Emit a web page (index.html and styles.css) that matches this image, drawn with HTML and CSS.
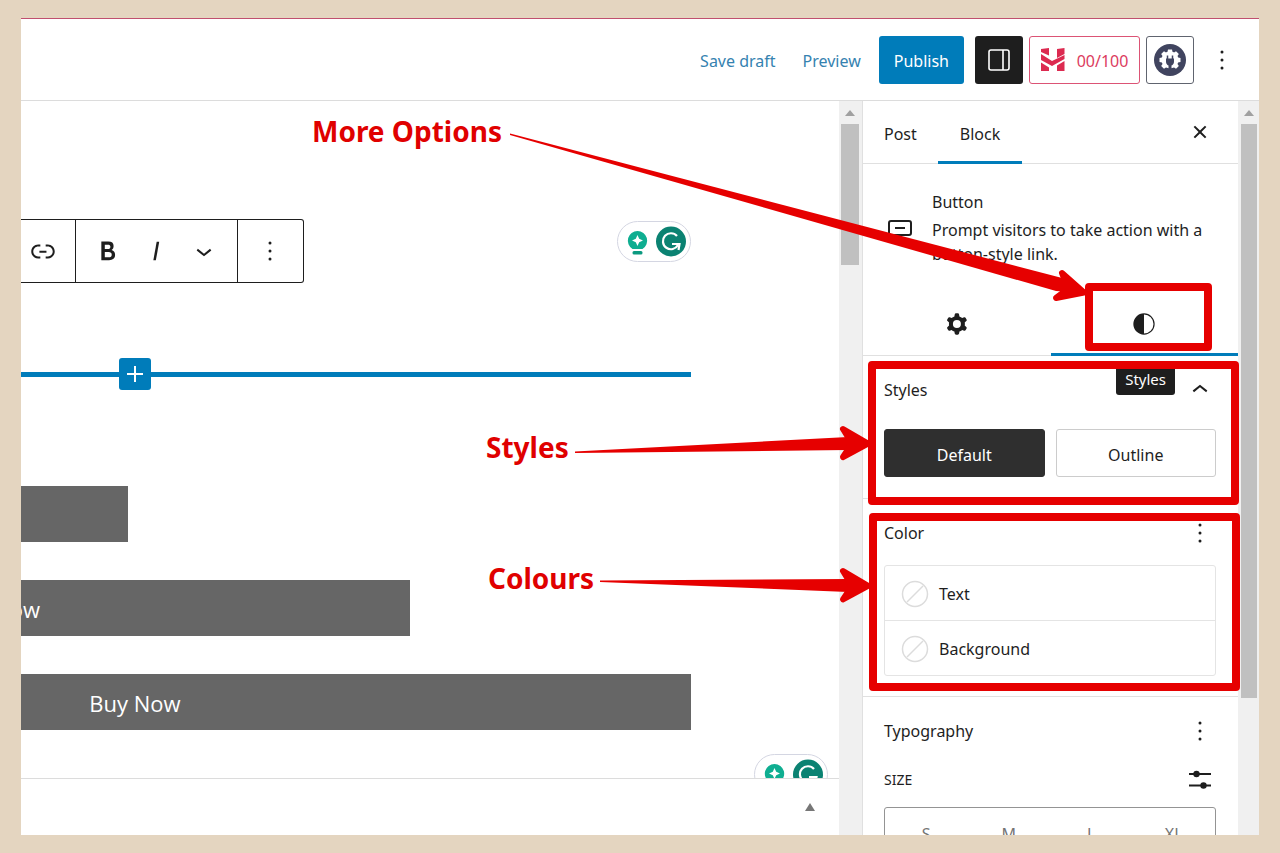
FILE: index.html
```html
<!DOCTYPE html>
<html lang="en">
<head>
<meta charset="utf-8">
<title>Edit post</title>
<link rel="stylesheet" href="styles.css">
</head>
<body>
<div class="frame">
  <header class="header">
    <button class="link-button">Save draft</button>
    <button class="link-button">Preview</button>
    <button class="publish">Publish</button>
    <div class="header-tools">
      <button class="tool tool-dark" aria-label="Settings">
        <svg class="icon" viewBox="0 0 32 32"><rect x="6" y="6" width="20" height="20" rx="2" fill="none" stroke="#fff" stroke-width="1.600"/><path d="M20 6v20" stroke="#fff" stroke-width="1.600"/></svg>
      </button>
      <button class="tool score">
        <svg class="score-icon" viewBox="0 0 24 24"><g fill="#dc2a50"><path d="M0 1l8-1v7.500L0 4z"/><path d="M16 1l7.500-1v6L16 10z"/><path d="M0 6l11 7 12.500-6v4L11 18 0 12z"/><path d="M0 14.500l8 5V23H0z"/><path d="M16 17.500l7.500-4.500v10H16z"/></g></svg>
        <span>00/100</span>
      </button>
      <button class="tool tool-outline" aria-label="Plugin settings">
        <svg class="icon" viewBox="0 0 32 32"><circle cx="16" cy="16" r="16" fill="#40445f"/><g fill="#fff"><circle cx="16" cy="16" r="8.500"/><path d="M14 5.500h4l1 5h-6z"/><path d="M14 5.500h4l1 5h-6z" transform="rotate(45 16 16)"/><path d="M14 5.500h4l1 5h-6z" transform="rotate(90 16 16)"/><path d="M14 5.500h4l1 5h-6z" transform="rotate(135 16 16)"/><path d="M14 5.500h4l1 5h-6z" transform="rotate(225 16 16)"/><path d="M14 5.500h4l1 5h-6z" transform="rotate(270 16 16)"/><path d="M14 5.500h4l1 5h-6z" transform="rotate(315 16 16)"/></g><path d="M12 14.500h8v3c0 2-1 3.500-2.500 4V27h-3v-5.500c-1.500-.5-2.500-2-2.500-4z" fill="#40445f"/><path d="M13.500 11.500v4M18.500 11.500v4" stroke="#40445f" stroke-width="1.500"/></svg>
      </button>
    </div>
    <button class="dots-button" aria-label="Options"><svg class="icon" viewBox="0 0 32 32"><circle cx="16" cy="8" r="1.500"/><circle cx="16" cy="16" r="1.500"/><circle cx="16" cy="24" r="1.500"/></svg></button>
  </header>

  <div class="workspace">
    <main class="canvas">
      <div class="editor">
        <div class="toolbar-row">
          <div class="toolbar" role="toolbar" aria-label="Block tools">
            <div class="toolbar-group group-link">
              <button aria-label="Link"><svg class="icon" viewBox="0 0 24 24"><path d="M15.600 7.200H14v1.500h1.600c2 0 3.700 1.700 3.700 3.700s-1.700 3.700-3.700 3.700H14v1.500h1.600c2.800 0 5.200-2.300 5.200-5.200 0-2.900-2.300-5.200-5.200-5.200zM4.700 12.400c0-2 1.700-3.700 3.700-3.700H10V7.200H8.400c-2.900 0-5.200 2.300-5.200 5.200 0 2.900 2.300 5.200 5.200 5.200H10v-1.500H8.400c-2 0-3.700-1.700-3.700-3.700zm4.600.9h5.300v-1.500H9.300v1.500z"/></svg></button>
            </div>
            <div class="toolbar-group group-format">
              <button aria-label="Bold"><svg class="icon" viewBox="0 0 24 24"><path d="M14.700 11.300c1-.6 1.500-1.600 1.500-3 0-2.300-1.300-3.400-4-3.400H7v14h5.800c1.400 0 2.500-.3 3.300-1 .8-.7 1.200-1.700 1.200-2.900.1-1.900-.8-3.100-2.600-3.700zm-5.100-4h2.300c.6 0 1.100.1 1.400.4.3.3.5.7.5 1.200s-.2 1-.5 1.200c-.3.3-.8.4-1.400.4H9.600V7.300zm4.600 9c-.4.3-1 .4-1.700.4H9.600v-3.900h2.900c.7 0 1.300.2 1.700.5.4.3.6.8.6 1.500s-.2 1.200-.6 1.500z"/></svg></button>
              <button aria-label="Italic"><svg class="icon" viewBox="0 0 24 24"><path d="M12.500 5L10 19h1.900l2.500-14z"/></svg></button>
              <button aria-label="More"><svg class="icon" viewBox="0 0 24 24"><path d="M17.500 11.600L12 16l-5.500-4.400.9-1.200L12 14l4.500-3.600 1 1.200z"/></svg></button>
            </div>
            <div class="toolbar-group group-more">
              <button aria-label="Options"><svg class="icon" viewBox="0 0 32 32"><circle cx="16" cy="8" r="1.500"/><circle cx="16" cy="16" r="1.500"/><circle cx="16" cy="24" r="1.500"/></svg></button>
            </div>
          </div>
          <div class="assistant">
            <svg viewBox="0 0 74 41"><rect x=".5" y=".5" width="73" height="40" rx="20" fill="#fff" stroke="#d4d6e2"/><path d="M20.500 10a9.700 9.700 0 0 0-5 18h10a9.700 9.700 0 0 0-5-18z" fill="#0fae91"/><rect x="15.500" y="30" width="10" height="3.500" rx="1.500" fill="#0b9a80"/><path d="M20.500 14l1.700 3.800 3.800 1.700-3.800 1.700-1.700 3.800-1.700-3.800-3.800-1.700 3.800-1.700z" fill="#fff"/><circle cx="54" cy="20.500" r="15" fill="#0b8272"/><path d="M60 15a8 8 0 1 0 1 9" fill="none" stroke="#fff" stroke-width="2.200"/><path d="M55 23h7.500l-1 6" fill="none" stroke="#fff" stroke-width="2.200"/></svg>
          </div>
        </div>

        <div class="blocks">
          <div class="block-list">
            <div class="inserter"><button class="add" aria-label="Add block"><svg viewBox="0 0 32 32"><path d="M16 8v16M8 16h16" stroke="#fff" stroke-width="2"/></svg></button></div>
            <div class="buttons">
              <button class="buy half" aria-label="Buy now"></button>
              <button class="buy three-quarter">Buy Now</button>
              <button class="buy">Buy Now</button>
            </div>
          </div>
        </div>
        <div class="assistant assistant-corner">
          <svg viewBox="0 0 74 41"><rect x=".5" y=".5" width="73" height="40" rx="20" fill="#fff" stroke="#d4d6e2"/><path d="M20.500 10a9.700 9.700 0 0 0-5 18h10a9.700 9.700 0 0 0-5-18z" fill="#0fae91"/><path d="M20.500 14l1.700 3.800 3.800 1.700-3.800 1.700-1.700 3.800-1.700-3.800-3.800-1.700 3.800-1.700z" fill="#fff"/><circle cx="54" cy="20.500" r="15" fill="#0b8272"/><path d="M60 15a8 8 0 1 0 1 9" fill="none" stroke="#fff" stroke-width="2.200"/><path d="M55 23h7.500l-1 6" fill="none" stroke="#fff" stroke-width="2.200"/></svg>
        </div>
      </div>
      <div class="metabox"><button aria-label="Expand panel"><svg viewBox="0 0 12 10"><path d="M6 1l5 8H1z" fill="#777"/></svg></button></div>
    </main>
    <div class="scrollbar"><svg viewBox="0 0 12 8"><path d="M6 1l5 6H1z" fill="#a0a0a0"/></svg><div class="thumb thumb-short"></div></div>

    <aside class="sidebar">
      <div class="tabs" role="tablist">
        <button class="tab" role="tab">Post</button>
        <button class="tab tab-active" role="tab" aria-selected="true">Block</button>
        <button class="close" aria-label="Close settings"><svg class="icon" viewBox="0 0 24 24"><path d="M12 13.060l3.712 3.713 1.061-1.060L13.061 12l3.712-3.712-1.060-1.060L12 10.938 8.288 7.227l-1.061 1.060L10.939 12l-3.712 3.712 1.060 1.061L12 13.061z"/></svg></button>
      </div>
      <div class="card">
        <svg class="icon" viewBox="0 0 32 32"><rect x="5" y="5" width="22" height="14" rx="2" fill="none" stroke="#1e1e1e" stroke-width="2"/><path d="M11 12h10" stroke="#1e1e1e" stroke-width="2"/></svg>
        <div>
          <h2>Button</h2>
          <p>Prompt visitors to take action with a button-style link.</p>
        </div>
      </div>
      <div class="subtabs" role="tablist">
        <button class="subtab" role="tab" aria-label="Settings"><svg class="icon" viewBox="0 0 24 24"><path fill-rule="evenodd" d="M10.289 4.836A1 1 0 0111.275 4h1.306a1 1 0 01.987.836l.244 1.466c.787.26 1.503.679 2.108 1.218l1.393-.522a1 1 0 011.216.437l.653 1.130a1 1 0 01-.23 1.273l-1.148.944a6.025 6.025 0 010 2.435l1.149.946a1 1 0 01.23 1.272l-.653 1.130a1 1 0 01-1.216.437l-1.394-.522c-.605.54-1.320.958-2.108 1.218l-.244 1.466a1 1 0 01-.987.836h-1.306a1 1 0 01-.986-.836l-.244-1.466a5.995 5.995 0 01-2.108-1.218l-1.394.522a1 1 0 01-1.217-.436l-.653-1.131a1 1 0 01.23-1.272l1.149-.946a6.026 6.026 0 010-2.435l-1.148-.944a1 1 0 01-.23-1.272l.653-1.131a1 1 0 011.217-.437l1.393.522a5.994 5.994 0 012.108-1.218l.244-1.466zM14.929 12a3 3 0 11-6 0 3 3 0 016 0z"/></svg></button>
        <button class="subtab subtab-active" role="tab" aria-selected="true" aria-label="Appearance"><svg class="icon" viewBox="0 0 24 24"><path fill-rule="evenodd" d="M20 12a8 8 0 1 1-16 0 8 8 0 0 1 16 0zm-.9 0a7.100 7.100 0 0 1-7.100 7.100V4.900a7.100 7.100 0 0 1 7.100 7.100z"/></svg></button>
      </div>

      <section class="panel">
        <div class="panel-head">
          <h3>Styles</h3>
          <button class="panel-button" aria-label="Collapse"><svg class="icon" viewBox="0 0 24 24"><path d="M6.500 12.400L12 8l5.500 4.400-.9 1.200L12 10l-4.500 3.600-1-1.200z"/></svg></button>
          <span class="tooltip" role="tooltip">Styles</span>
        </div>
        <div class="variations">
          <button class="variation variation-active">Default</button>
          <button class="variation">Outline</button>
        </div>
      </section>

      <section class="panel panel-color">
        <div class="panel-head">
          <h3>Color</h3>
          <button class="panel-button" aria-label="Color options"><svg class="icon" viewBox="0 0 32 32"><circle cx="16" cy="8" r="1.500"/><circle cx="16" cy="16" r="1.500"/><circle cx="16" cy="24" r="1.500"/></svg></button>
        </div>
        <div class="colors">
          <button class="color"><svg viewBox="0 0 28 28"><circle cx="14" cy="14" r="12.500" fill="none" stroke="#dcdcdc" stroke-width="1.500"/><path d="M6 22L22 6" stroke="#dcdcdc" stroke-width="1.500"/></svg>Text</button>
          <button class="color"><svg viewBox="0 0 28 28"><circle cx="14" cy="14" r="12.500" fill="none" stroke="#dcdcdc" stroke-width="1.500"/><path d="M6 22L22 6" stroke="#dcdcdc" stroke-width="1.500"/></svg>Background</button>
        </div>
      </section>

      <section class="panel">
        <div class="panel-head">
          <h3>Typography</h3>
          <button class="panel-button" aria-label="Typography options"><svg class="icon" viewBox="0 0 32 32"><circle cx="16" cy="8" r="1.500"/><circle cx="16" cy="16" r="1.500"/><circle cx="16" cy="24" r="1.500"/></svg></button>
        </div>
        <div class="size-row">
          <h4>SIZE</h4>
          <button class="panel-button" aria-label="Set custom size"><svg class="icon" viewBox="0 0 32 32"><path d="M5 10h22M5 21.500h22" stroke="#1e1e1e" stroke-width="2"/><circle cx="12.500" cy="10" r="3.200"/><circle cx="19.500" cy="21.500" r="3.200"/></svg></button>
        </div>
        <div class="sizes">
          <button>S</button><button>M</button><button>L</button><button>XL</button>
        </div>
      </section>
    </aside>
    <div class="scrollbar scrollbar-right"><svg viewBox="0 0 12 8"><path d="M6 1l5 6H1z" fill="#a0a0a0"/></svg><div class="thumb thumb-long"></div></div>
  </div>

  <svg class="notes" viewBox="21 18 1238 817">
    <g fill="none" stroke="#e60000" stroke-width="8" stroke-linejoin="round">
      <rect x="1089" y="287" width="119" height="60"/>
      <rect x="872" y="365" width="363" height="136"/>
      <rect x="873" y="517" width="363" height="170"/>
    </g>
    <g fill="#e60000">
      <path d="M510 133.500L1066 279l22 14.500-32-2.500L510 135z"/>
      <path d="M575 451.500L848 437l23 6.500-23 6.500L575 453z"/>
      <path d="M600 580.500L848 579l23 6.800-23 6.200L600 582z"/>
    </g>
    <g fill="#e60000" stroke="#e60000" stroke-width="6" stroke-linecap="round" stroke-linejoin="round">
      <path d="M1062 273l22 19.500-28 5.500 12-9z"/>
      <path d="M843 429l25 14.500-25 13.500 9-13.500z"/>
      <path d="M843 571l25 14.800-25 13.500 9-13.500z"/>
    </g>
    <g class="note-text">
      <text x="312" y="142">More Options</text>
      <text x="486" y="458">Styles</text>
      <text x="488" y="589">Colours</text>
    </g>
  </svg>
</div>
</body>
</html>
```
FILE: styles.css
```css
* { box-sizing: border-box; }

body {
  margin: 0;
  height: 100vh;
  padding: 18px 21px;
  display: flex;
  background: #e4d5c0;
  color: #1e1e1e;
  font: 16px/24px "Noto Sans", "Open Sans", sans-serif;
}

button {
  margin: 0;
  padding: 0;
  border: 0;
  background: none;
  color: inherit;
  font: inherit;
}

svg { display: block; flex: none; fill: #1e1e1e; }
h2, h3, h4, p { margin: 0; font-size: 16px; font-weight: 400; }
.icon { width: 32px; height: 32px; }

.frame {
  position: relative;
  flex: 1;
  min-width: 0;
  display: flex;
  flex-direction: column;
  overflow: hidden;
  background: #fff;
  border-top: 1px solid #c0506f;
}

.header {
  display: flex;
  justify-content: flex-end;
  align-items: center;
  padding: 17px 13px 16px 0;
  border-bottom: 1px solid #dcdcdc;
}
.link-button { margin-right: 27px; padding-top: 2px; color: #3582b0; }
.link-button + .link-button { margin-right: 18px; }
.publish {
  height: 48px;
  padding: 2px 15px 0;
  border-radius: 3px;
  background: #007cba;
  color: #fff;
}
.header-tools { display: flex; gap: 6px; margin: 0 4px 0 11px; }
.tool {
  display: flex;
  align-items: center;
  justify-content: center;
  width: 48px;
  height: 48px;
  border-radius: 3px;
}
.tool-dark { background: #1e1e1e; }
.tool-outline { border: 1px solid #60646f; }
.score {
  width: 111px;
  gap: 12px;
  border: 1px solid #dc5375;
  color: #dc3c60;
}
.score-icon { width: 24px; height: 24px; }
.score span { padding-top: 2px; }
.dots-button { width: 48px; display: flex; justify-content: center; }

.workspace { flex: 1; min-height: 0; display: flex; }
.canvas { flex: 1; min-width: 0; display: flex; flex-direction: column; }

.editor {
  position: relative;
  flex: 1;
  min-height: 0;
  overflow: hidden;
  padding: 118px 148px 0 0;
}
.toolbar-row { display: flex; justify-content: space-between; align-items: flex-start; }
.toolbar {
  display: flex;
  height: 64px;
  border: 1px solid #1e1e1e;
  border-left: 0;
  border-radius: 0 3px 3px 0;
}
.toolbar-group { display: flex; align-items: center; }
.toolbar-group + .toolbar-group { border-left: 1px solid #1e1e1e; }
.group-link { padding: 0 16px 0 6px; }
.group-format { gap: 16px; padding: 0 17px 0 16px; }
.group-more { padding: 0 17px 0 16px; }
.assistant { width: 74px; margin-top: 2px; }
.assistant-corner { position: absolute; right: 11px; bottom: -17px; }

.blocks { display: flex; justify-content: flex-end; padding-top: 75px; }
.block-list { flex: none; width: 1112px; }
.inserter {
  display: flex;
  justify-content: center;
  background: linear-gradient(#007cba, #007cba) center / 100% 5px no-repeat;
}
.add { width: 32px; height: 32px; border-radius: 3px; background: #007cba; }
.buttons { display: flex; flex-direction: column; gap: 38px; padding-top: 96px; }
.buy {
  width: 100%;
  height: 56px;
  padding-top: 2px;
  background: #666;
  color: #fff;
  font: 22px/30px "Open Sans", "Noto Sans", sans-serif;
}
.half { width: calc(50% - 7px); }
.three-quarter { width: calc(75% - 3px); }

.metabox {
  display: flex;
  justify-content: flex-end;
  align-items: center;
  height: 57px;
  padding-right: 23px;
  border-top: 1px solid #dcdcdc;
}
.metabox svg { width: 12px; height: 10px; }

.scrollbar {
  flex: none;
  width: 23px;
  padding: 8px 3px 0 2px;
  background: #f0f0f0;
}
.scrollbar svg { width: 12px; height: 8px; margin: 0 auto 7px; }
.scrollbar-right { width: 21px; padding-left: 3px; padding-right: 2px; }
.thumb { background: #c0c0c0; }
.thumb-short { height: 141px; }
.thumb-long { height: 574px; }

.sidebar {
  flex: none;
  width: 376px;
  overflow: hidden;
  border-left: 1px solid #e0e0e0;
}
.tabs { display: flex; height: 63px; border-bottom: 1px solid #e0e0e0; }
.tab { padding: 3px 21px 0; }
.tab-active { border-bottom: 3px solid #007cba; padding: 6px 22px 0; height: 63px; }
.close { margin-left: auto; padding-right: 22px; }
.card { display: flex; gap: 16px; padding: 26px 21px 0; }
.card .icon { margin-top: 26px; }
.card h2 { margin-bottom: 4px; }
.subtabs { display: flex; height: 64px; margin-top: 26px; border-bottom: 1px solid #e0e0e0; }
.subtab { flex: 1; display: flex; justify-content: center; align-items: center; }
.subtab-active { height: 64px; border-bottom: 3px solid #007cba; padding-top: 3px; }

.panel { padding: 18px 22px 21px 21px; border-bottom: 1px solid #e0e0e0; }
.panel-color { padding-bottom: 20px; }
.panel-head { position: relative; display: flex; justify-content: space-between; align-items: center; }
.tooltip {
  position: absolute;
  right: 41px;
  top: -9px;
  padding: 2px 9px 4px;
  border-radius: 3px;
  background: #1e1e1e;
  color: #fff;
  font-size: 15px;
}
.variations { display: flex; gap: 11px; margin-top: 23px; }
.variation {
  flex: 1;
  height: 48px;
  padding-top: 3px;
  border: 1px solid #ccc;
  border-radius: 3px;
}
.variation-active { background: #2f2f2f; border-color: #2f2f2f; color: #fff; }
.colors { margin-top: 16px; border: 1px solid #e4e4e4; border-radius: 3px; }
.color { display: flex; align-items: center; gap: 10px; width: 100%; height: 54px; padding: 1px 0 0 16px; }
.color + .color { height: 55px; border-top: 1px solid #e4e4e4; }
.color svg { width: 28px; height: 28px; }
.size-row { display: flex; justify-content: space-between; align-items: center; margin-top: 17px; }
.size-row h4 { font-size: 14px; }
.sizes { display: flex; height: 54px; margin-top: 11px; border: 1px solid #949494; border-radius: 3px; }
.sizes button { flex: 1; color: #757575; }

.notes { position: absolute; top: -1px; right: 0; width: 1238px; height: 817px; pointer-events: none; }
.note-text { fill: #e00000; font: 700 28px "Noto Sans", "Open Sans", sans-serif; }
```
